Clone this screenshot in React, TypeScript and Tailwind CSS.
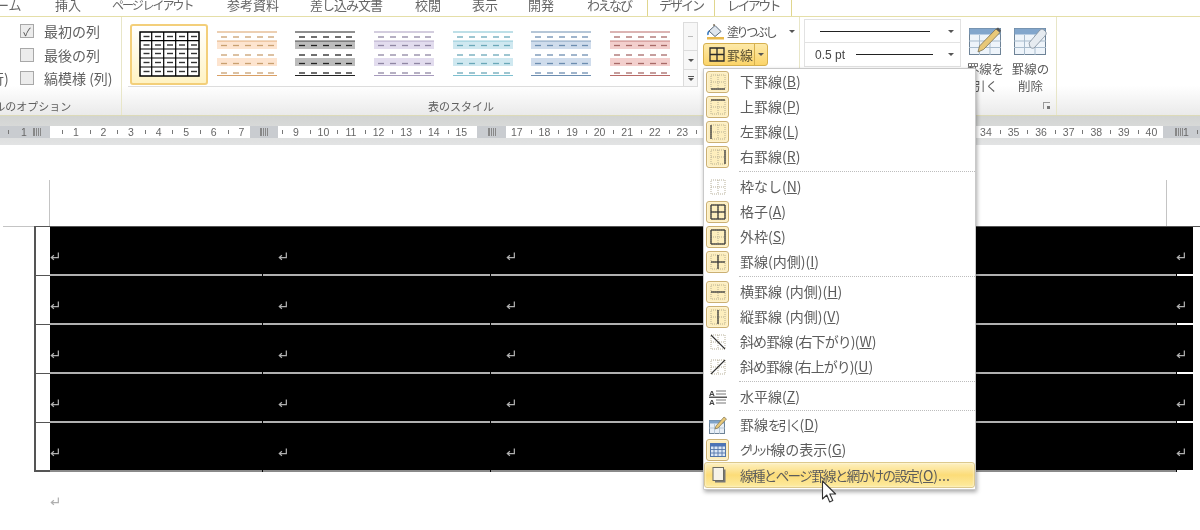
import type { ReactNode } from "react";

const TABS = [
  { label: "ホーム", cls: "-ml-[17px] w-[39px]" },
  { label: "挿入", cls: "ml-[33px] w-[26px]" },
  { label: "ページ レイアウト", cls: "ml-[31px] w-[83px] text-[12px] tracking-[-2px]" },
  { label: "参考資料", cls: "ml-[32px] w-[52px]" },
  { label: "差し込み文書", cls: "ml-[31px] w-[72px] tracking-[-1px]" },
  { label: "校閲", cls: "ml-[33px] w-[26px]" },
  { label: "表示", cls: "ml-[31px] w-[26px]" },
  { label: "開発", cls: "ml-[30px] w-[26px]" },
  { label: "わえなび", cls: "ml-[33px] w-[42px] tracking-[-2px]" },
];

const THUMBS = [
  { line: "#d9a066", band: "#fde4cf", dash: "#c9a070" },
  { line: "#222222", band: "#bcbcbc", dash: "#222222" },
  { line: "#a79bbd", band: "#e2dcee", dash: "#8f86a3" },
  { line: "#7fc0d0", band: "#cfe8f0", dash: "#6aa8b8" },
  { line: "#6c8db0", band: "#cfdcec", dash: "#6c8db0" },
  { line: "#b86b68", band: "#f3cfcd", dash: "#a86a68" },
];

function Ret() {
  return (
    <svg width="10" height="10" viewBox="0 0 9 9" fill="none" stroke="#b0b0b0" strokeWidth="1.1">
      <path d="M7.5 0.5V5H1.5" />
      <path d="M3.5 3L1.2 5L3.5 7" />
    </svg>
  );
}

function GridThumb() {
  return (
    <svg width="61" height="46" viewBox="0 0 61 46">
      <rect x="1" y="1" width="59" height="44" fill="#fff" stroke="#000" strokeWidth="1.5" />
      {[9.7, 18, 27, 36].map((y) => (
        <path key={y} d={`M1 ${y}H60`} stroke="#000" strokeWidth="1.2" />
      ))}
      {[12.7, 24.7, 36.7, 48.7].map((x) => (
        <path key={x} d={`M${x} 1V45`} stroke="#000" strokeWidth="1.2" />
      ))}
      {[5.5, 14, 22.5, 31.5, 40.5].map((y) =>
        [4.5, 16, 28, 40, 52].map((x) => <path key={x} d={`M${x} ${y}h6`} stroke="#333" strokeWidth="1.4" />),
      )}
    </svg>
  );
}

function BandThumb({ line, band, dash }: { line: string; band: string; dash: string }) {
  return (
    <svg width="61" height="46" viewBox="0 0 61 46">
      <rect x="0" y="10" width="60" height="8" fill={band} />
      <rect x="0" y="27" width="60" height="8" fill={band} />
      <path d="M0 1H60M0 44.5H60" stroke={line} strokeWidth="1.2" />
      <path d="M0 10H60" stroke={line} strokeWidth="0.8" />
      {[6, 14.5, 24, 32.5, 42].map((y) =>
        [4, 16, 28, 40, 51].map((x) => <path key={x} d={`M${x} ${y}h6`} stroke={dash} strokeWidth="1.3" />),
      )}
    </svg>
  );
}

function PaintBucket() {
  return (
    <svg width="19" height="17" viewBox="0 0 19 17" className="shrink-0">
      <path d="M3 8L9 2.5L15 8.5L9 13.5Z" fill="#dfe6ee" stroke="#5a6a7a" strokeWidth="1" />
      <path d="M8 3V1" stroke="#6a5a40" strokeWidth="1.2" />
      <path d="M3 8Q1.5 10 2 12" stroke="#3d7cc0" strokeWidth="1.6" fill="none" />
      <rect x="1" y="14" width="17" height="2.5" fill="#e8b84a" />
    </svg>
  );
}

function TableBase() {
  return (
    <>
      <rect x="0.5" y="1.5" width="31" height="26" fill="#eef4fa" stroke="#6d8296" />
      <rect x="0.5" y="1.5" width="31" height="6" fill="#82a6cc" />
      <path d="M0 14H32M0 20.5H32M10.5 8V28M21 8V28" stroke="#a9bccd" strokeWidth="1" />
    </>
  );
}

function PencilTable() {
  return (
    <svg width="33" height="30" viewBox="0 0 33 30">
      <TableBase />
      <path d="M9 25L10.5 19L27 2L31 5.5L14.5 22.5Z" fill="#e8c878" stroke="#7a7050" strokeWidth="0.8" />
      <path d="M27 2L29 0.5L32 3.5L31 5.5Z" fill="#555" />
    </svg>
  );
}

function EraserTable() {
  return (
    <svg width="33" height="30" viewBox="0 0 33 30">
      <TableBase />
      <path d="M15 16L26 3Q28 1 30 3L32 5Q33 7 31 9L20 21Q18 22 16 20Z" fill="#e6ebf0" stroke="#7d8b99" strokeWidth="0.8" />
    </svg>
  );
}

type BorderPart = "b" | "t" | "l" | "r" | "h" | "v";

function BorderIcon({ parts = [], diag }: { parts?: BorderPart[]; diag?: "down" | "up" }) {
  const d: Record<BorderPart, string> = {
    b: "M1 15H15",
    t: "M1 1H15",
    l: "M1 1V15",
    r: "M15 1V15",
    h: "M1 8H15",
    v: "M8 1V15",
  };
  return (
    <svg width="16" height="16" viewBox="0 0 16 16" fill="none">
      <path d="M1 1H15V15H1ZM1 8H15M8 1V15" stroke="#b0a890" strokeWidth="0.9" strokeDasharray="1 1" />
      {parts.map((p) => (
        <path key={p} d={d[p]} stroke="#3d3d3d" strokeWidth="1.3" />
      ))}
      {diag === "down" && <path d="M1 1L15 15" stroke="#333" strokeWidth="1.1" />}
      {diag === "up" && <path d="M1 15L15 1" stroke="#333" strokeWidth="1.1" />}
    </svg>
  );
}

function HrIcon() {
  return (
    <svg width="18" height="16" viewBox="0 0 18 16">
      <text x="0" y="7" fontSize="8" fontWeight="700" fontFamily="Liberation Sans, sans-serif" fill="#444">A</text>
      <text x="0" y="15.5" fontSize="8" fontWeight="700" fontFamily="Liberation Sans, sans-serif" fill="#444">A</text>
      <path d="M7 2H17M7 5H17M7 11H17M7 14H17" stroke="#777" strokeWidth="1" />
      <path d="M0 8.2H18" stroke="#333" strokeWidth="1.2" />
    </svg>
  );
}

function DrawIcon() {
  return (
    <svg width="18" height="18" viewBox="0 0 18 18">
      <rect x="0.5" y="4.5" width="15" height="13" fill="#e8eff7" stroke="#6d8296" />
      <rect x="0.5" y="4.5" width="15" height="3" fill="#7fa3c9" />
      <path d="M0 12H16M5.5 8V18M10.5 8V18" stroke="#a9bccd" strokeWidth="0.8" />
      <path d="M6 13L7 10L15 1L17.5 3L9 12Z" fill="#e8c878" stroke="#6b6345" strokeWidth="0.6" />
    </svg>
  );
}

function GridIcon() {
  return (
    <svg width="16" height="14" viewBox="0 0 16 14">
      <rect x="0.5" y="0.5" width="15" height="13" fill="#dbe7f6" stroke="#5275a8" />
      <rect x="0.5" y="0.5" width="15" height="3" fill="#4c74b8" />
      <path d="M0 6.5H16M0 10H16M4 3V14M8 3V14M12 3V14" stroke="#5275a8" strokeWidth="0.9" />
    </svg>
  );
}

function PageIcon() {
  return (
    <svg width="14" height="16" viewBox="0 0 14 16">
      <rect x="3" y="2.5" width="10.5" height="13" fill="#777" />
      <rect x="1" y="0.5" width="10.5" height="13" fill="#f6f3ea" stroke="#6b6b62" />
    </svg>
  );
}

function Cursor() {
  return (
    <svg width="16" height="24" viewBox="0 0 16 24">
      <path d="M1.5 1V19L5.8 15L8.7 22L11.8 20.6L8.8 14H14.6Z" fill="#fff" stroke="#333" strokeWidth="1.1" strokeLinejoin="round" />
    </svg>
  );
}

function Caret({ className = "" }: { className?: string }) {
  return <span className={`h-0 w-0 border-x-[3px] border-t-[3px] border-x-transparent border-t-[#555] ${className}`} />;
}

function MenuRow({
  icon,
  active,
  framed,
  textCls = "",
  children,
}: {
  icon: ReactNode;
  active?: boolean;
  framed?: boolean;
  textCls?: string;
  children: ReactNode;
}) {
  return (
    <div
      className={`flex items-center text-[14px] text-[#5c5c5c] ${
        active
          ? "h-[26px] rounded-[3px] border border-[#dcc98e] bg-gradient-to-b from-[#fdf0bf] via-[#fcdc78] to-[#fdeb9f] shadow-[inset_0_0_2px_#fff]"
          : "h-[25px]"
      }`}
    >
      <span className="flex w-[36px] shrink-0 pl-[2px]">
        <span
          className={`flex h-[22px] w-[23px] items-center justify-center rounded-[3px] ${
            framed ? "border border-[#cbb073] bg-[#fdeebd] shadow-[inset_0_0_2px_#fff]" : ""
          }`}
        >
          {icon}
        </span>
      </span>
      <span className={`whitespace-nowrap ${textCls}`}>{children}</span>
    </div>
  );
}

function Sep({ h = "h-[5px]" }: { h?: string }) {
  return (
    <div className={`flex items-center pl-[35px] ${h}`}>
      <div className="w-full border-t border-dotted border-[#bdbdbd]" />
    </div>
  );
}

function RulerCells({ from, to }: { from: number; to: number }) {
  const nums: number[] = [];
  for (let n = from; n <= to; n++) nums.push(n);
  return (
    <>
      {nums.map((n) => (
        <span key={n} className="relative flex w-[27.6px] shrink-0 items-center justify-center">
          <span className="absolute left-0 top-[4px] h-[4px] w-px bg-[#777]" />
          {n}
        </span>
      ))}
    </>
  );
}

function RulerMark() {
  return <span className="block h-[8px] w-[8px] border-x border-[#888] bg-[repeating-linear-gradient(90deg,#888_0,#888_1px,transparent_1px,transparent_2px)]" />;
}

function TableRow({ last }: { last?: boolean }) {
  const line = last ? "bg-[#8a8a8a]" : "bg-[#b0b0b0]";
  return (
    <div className="flex h-[49px]">
      <div className={`w-[16px] border-l-2 border-[#555] bg-white ${last ? "border-b-2" : "border-b"}`} />
      <div className="flex w-[1143px] flex-col bg-black">
        <div className="flex flex-1 pt-[25px]">
          <div className="w-[213px]"><Ret /></div>
          <div className="w-[228px] pl-[15px]"><Ret /></div>
          <div className="flex flex-1 justify-between pl-[15px] pr-[7px]"><Ret /><Ret /></div>
        </div>
        <div className="flex h-[2px]">
          <span className={`w-[212px] ${line}`} />
          <span className="w-px" />
          <span className={`w-[227px] ${line}`} />
          <span className="w-px" />
          <span className={`w-[685px] ${line}`} />
          <span className="w-px" />
          <span className="flex-1 bg-white" />
        </div>
      </div>
    </div>
  );
}

export default function App() {
  return (
    <div className="relative h-[530px] w-[1200px] overflow-hidden bg-white font-['Noto_Sans_CJK_JP','Noto_Sans',sans-serif] blur-[0.4px]">
      {/* tab row */}
      <div className="flex h-[17px] overflow-hidden border-b border-[#e5dfa8] text-[13px] leading-[10px] text-[#666]">
        {TABS.map((t) => (
          <span key={t.label} className={`shrink-0 whitespace-nowrap ${t.cls}`}>{t.label}</span>
        ))}
        <span className="ml-[18px] h-[17px] w-[68px] shrink-0 border-x border-[#e0d68e] bg-white text-center tracking-[-2px]">デザイン</span>
        <span className="h-[16px] w-[77px] shrink-0 border-r border-[#e0d68e] text-center tracking-[-2.6px]">レイアウト</span>
      </div>

      {/* ribbon */}
      <div className="flex h-[99px] border-b border-[#dcdab8] bg-gradient-to-b from-white from-70% to-[#eaeaea] text-[#606060]">
        <div className="flex w-[122px] shrink-0 flex-col overflow-hidden border-r border-[#e8e6c8]">
          <div className="flex h-[80px] flex-col gap-[5.5px] pt-[5px] text-[14px] leading-[18px]">
            {["最初の列", "最後の列", "縞模様 (列)"].map((t, i) => (
              <div key={t} className="flex items-center">
                {i === 2 ? <span className="-ml-[10px] w-[19px] shrink-0 whitespace-nowrap">行)</span> : <span className="w-[9px] shrink-0" />}
                <span className="ml-[11px] flex h-[14px] w-[14px] shrink-0 items-center justify-center border border-[#a8a8a8] bg-[#ececec] text-[11px] leading-none text-[#555]">
                  {i === 0 ? "✓" : ""}
                </span>
                <span className="ml-[10px] whitespace-nowrap">{t}</span>
              </div>
            ))}
          </div>
          <div className="-ml-[38px] w-[110px] whitespace-nowrap text-[11px] leading-[18px]">テーブルのオプション</div>
        </div>

        <div className="flex w-[678px] shrink-0 flex-col border-r border-[#e8e6c8]">
          <div className="flex h-[80px] pl-[6px] pt-[5px]">
            <div className="flex h-[65px] w-[555px] shrink-0 items-center overflow-hidden border-b border-[#dddddd] bg-white pl-[2px]">
              <div className="flex h-[61px] w-[78px] shrink-0 items-center justify-center rounded-[3px] border-2 border-[#f3cf7a] bg-gradient-to-b from-white to-[#fff3c4]">
                <GridThumb />
              </div>
              {THUMBS.map((t) => (
                <div key={t.line} className="flex h-[61px] w-[78.6px] shrink-0 items-center justify-center">
                  <BandThumb line={t.line} band={t.band} dash={t.dash} />
                </div>
              ))}
            </div>
            <div className="flex h-[65px] w-[15px] shrink-0 flex-col border border-[#dcdcdc] bg-[#f7f7f7] text-[#666]">
              <div className="flex h-[28px] items-center justify-center border-b border-[#dcdcdc]"><span className="h-px w-[5px] bg-[#bbb]" /></div>
              <div className="flex h-[19px] items-center justify-center border-b border-[#dcdcdc]"><Caret /></div>
              <div className="flex flex-1 flex-col items-center justify-center gap-px"><span className="h-px w-[6px] bg-[#555]" /><Caret /></div>
            </div>
            <div className="ml-[5px] flex w-[90px] shrink-0 flex-col">
              <div className="flex h-[19px] items-center gap-[2px] pl-[3px] text-[12px] text-[#555]">
                <PaintBucket />
                <span className="whitespace-nowrap tracking-[-2.4px]">塗りつぶし</span>
                <Caret className="ml-[12px]" />
              </div>
              <div className="mt-[2px] flex h-[23px] w-[65px] items-center rounded-[3px] border border-[#d6b04e] bg-gradient-to-b from-[#fde9a8] to-[#fbd468] text-[13px] text-[#554c30]">
                <svg width="17" height="15" viewBox="0 0 17 15" className="ml-[5px] shrink-0" fill="none" stroke="#2a2a2a" strokeWidth="1.3">
                  <path d="M1 1H15V14H1ZM1 7.5H15M8 1V14" />
                </svg>
                <span className="ml-[1px] whitespace-nowrap leading-none">罫線</span>
                <span className="ml-[1px] flex h-full flex-1 items-center justify-center border-l border-[#d6b04e]"><Caret /></span>
              </div>
            </div>
          </div>
          <div className="pl-[1px] text-center text-[11px] leading-[18px]">表のスタイル</div>
        </div>

        <div className="relative flex h-full w-[257px] shrink-0 border-r border-[#e8e6c8] pl-[4px] pt-[2px]">
          <div className="w-[157px] text-[#444]">
            <div className="flex h-[24px] items-center border border-[#e2e2e2] bg-white pl-[15px] pr-[6px]">
              <span className="h-px w-[110px] bg-[#222]" />
              <Caret className="ml-auto" />
            </div>
            <div className="flex h-[24px] items-center border-x border-b border-[#e2e2e2] bg-white pl-[10px] pr-[6px] text-[12px]">
              <span className="font-['Liberation_Sans',sans-serif]">0.5 pt</span>
              <span className="ml-[11px] h-px w-[77px] bg-[#222]" />
              <Caret className="ml-auto" />
            </div>
          </div>
          <div className="ml-[2px] flex w-[45px] flex-col items-center pt-[8px] text-center text-[12.5px] leading-[17px] text-[#5c5c5c]">
            <PencilTable />
            <span className="mt-[3px]">罫線を<br />引く</span>
          </div>
          <div className="flex w-[45px] flex-col items-center pt-[8px] text-center text-[12.5px] leading-[17px] text-[#5c5c5c]">
            <EraserTable />
            <span className="mt-[3px]">罫線の<br />削除</span>
          </div>
          <span className="absolute bottom-[6px] right-[6px] h-[7px] w-[7px] border-l border-t border-[#999] after:absolute after:bottom-0 after:right-0 after:h-[3px] after:w-[3px] after:bg-[#777]" />
        </div>
      </div>

      {/* ruler band */}
      <div className="h-[29px] bg-gradient-to-b from-[#d2d4d2] to-[#e2e3e4] pt-[10px]">
        <div className="flex h-[12px] overflow-hidden bg-[#c9ccd0] font-['Liberation_Sans',sans-serif] text-[10.5px] leading-[12px] text-[#666]">
          <div className="flex w-[50px] shrink-0 items-center">
            <span className="ml-[8px] h-[4px] w-px bg-[#777]" />
            <span className="ml-[12px]">1</span>
            <span className="ml-[6px]"><RulerMark /></span>
          </div>
          <div className="flex w-[200px] shrink-0 overflow-hidden bg-white pl-[12px]"><RulerCells from={1} to={7} /></div>
          <div className="flex w-[28px] shrink-0 items-center justify-center"><RulerMark /></div>
          <div className="flex w-[199px] shrink-0 overflow-hidden bg-white pl-[4px]"><RulerCells from={9} to={15} /></div>
          <div className="flex w-[29px] shrink-0 items-center justify-center"><RulerMark /></div>
          <div className="w-[657px] shrink-0 overflow-hidden bg-white">
            <div className="-ml-[3px] flex"><RulerCells from={17} to={40} /></div>
          </div>
          <div className="flex flex-1 items-center pl-[12px]">
            <RulerMark />
            <span>1</span>
            <span className="ml-[8px] h-[4px] w-px bg-[#777]" />
          </div>
        </div>
      </div>

      {/* document */}
      <div className="pt-[35px]">
        <div className="-mb-px flex h-[47px]">
          <div className="ml-[3px] h-full w-[47px] border-b border-r border-[#c4c4c4]" />
          <div className="ml-[1116px] h-full w-[34px] border-b border-l border-[#c4c4c4]" />
        </div>
        <div className="relative ml-[34px] border-t border-[#555]">
          <TableRow />
          <TableRow />
          <TableRow />
          <TableRow />
          <TableRow last />
        </div>
        <div className="ml-[50px] mt-[25px]"><Ret /></div>
      </div>

      {/* borders dropdown */}
      <div className="absolute left-[703px] top-[68px] h-[422px] w-[273px] rounded-[1px] border border-[#c9c9c9] bg-white shadow-[1px_2px_4px_rgba(0,0,0,0.35)]">
        <MenuRow framed icon={<BorderIcon parts={["b"]} />}>下罫線(<u>B</u>)</MenuRow>
        <MenuRow framed icon={<BorderIcon parts={["t"]} />}>上罫線(<u>P</u>)</MenuRow>
        <MenuRow framed icon={<BorderIcon parts={["l"]} />}>左罫線(<u>L</u>)</MenuRow>
        <MenuRow framed icon={<BorderIcon parts={["r"]} />}>右罫線(<u>R</u>)</MenuRow>
        <Sep />
        <MenuRow icon={<BorderIcon />}>枠なし(<u>N</u>)</MenuRow>
        <MenuRow framed icon={<BorderIcon parts={["t", "b", "l", "r", "h", "v"]} />}>格子(<u>A</u>)</MenuRow>
        <MenuRow framed icon={<BorderIcon parts={["t", "b", "l", "r"]} />}>外枠(<u>S</u>)</MenuRow>
        <MenuRow framed icon={<BorderIcon parts={["h", "v"]} />}>罫線(内側)(<u>I</u>)</MenuRow>
        <Sep />
        <MenuRow framed icon={<BorderIcon parts={["h"]} />}>横罫線 (内側)(<u>H</u>)</MenuRow>
        <MenuRow framed icon={<BorderIcon parts={["v"]} />}>縦罫線 (内側)(<u>V</u>)</MenuRow>
        <MenuRow icon={<BorderIcon diag="down" />}>
          <span className="tracking-[-0.9px]">斜め罫線 (右下がり)</span>(<u>W</u>)
        </MenuRow>
        <MenuRow icon={<BorderIcon diag="up" />}>
          <span className="tracking-[-1px]">斜め罫線 (右上がり)</span>(<u>U</u>)
        </MenuRow>
        <Sep />
        <MenuRow icon={<HrIcon />}>水平線(<u>Z</u>)</MenuRow>
        <Sep h="h-[3px]" />
        <MenuRow icon={<DrawIcon />}>
          罫線<span className="text-[13px] tracking-[-2.5px]">を引く</span>(<u>D</u>)
        </MenuRow>
        <MenuRow framed icon={<GridIcon />}>
          <span className="text-[12px] tracking-[-4.2px]">グリッド</span>線の表示(<u>G</u>)
        </MenuRow>
        <MenuRow active icon={<PageIcon />} textCls="-ml-px">
          <span className="text-[13.5px] tracking-[-1.6px]">線種とページ罫線と網かけの設定</span>(<u>O</u>)...
        </MenuRow>
      </div>

      <div className="absolute left-[821px] top-[480px]"><Cursor /></div>
    </div>
  );
}
